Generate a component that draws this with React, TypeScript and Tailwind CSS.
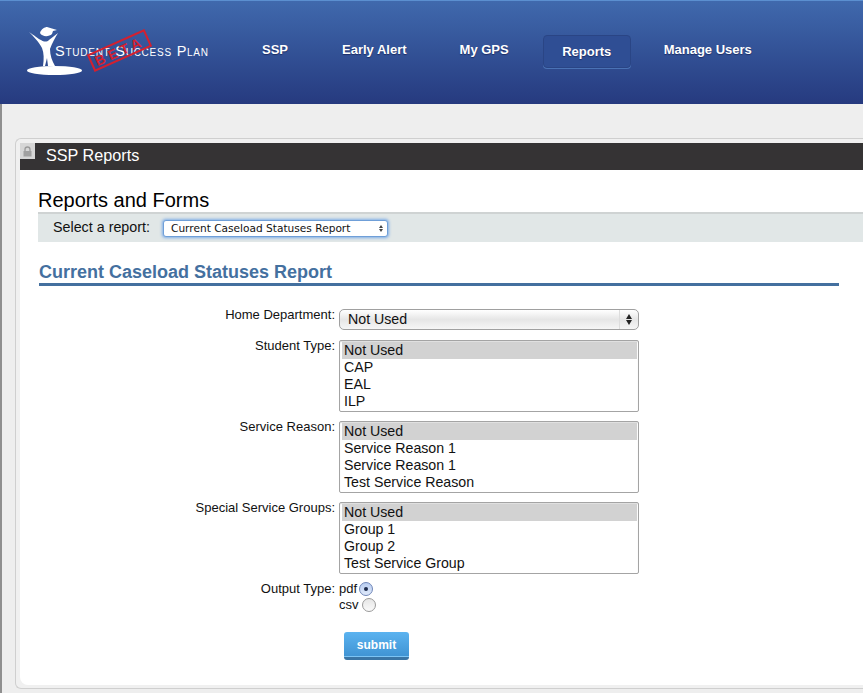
const font = "font-['Liberation_Sans',Arial,sans-serif]"

const navItems = ['SSP', 'Early Alert', 'My GPS', 'Reports', 'Manage Users']

function Logo() {
  return (
    <div className="relative h-[56px] w-[181px] shrink-0">
      <svg width="56" height="56" viewBox="0 0 56 56" className="absolute left-0 top-0">
        {/* cap */}
        <path d="M13 8 C14 4 18 2 20 2 L30 5 L26 6 L25 9 C22 12 15 12 13 8 Z" fill="#fff" />
        {/* body and arms */}
        <path d="M2 7 C7 10 11 14 14 15 C17 17 20 17 22 15 C25 13 28 10 31 8 C28 13 25 18 23 24 C23 30 25 36 28 41 L21 41 L20 33 L18 41 L16 41 C17 34 17 28 15 23 C12 17 6 11 2 7 Z" fill="#fff" />
        <ellipse cx="27.500" cy="45.500" rx="27.500" ry="4.500" fill="#fff" />
      </svg>
      <span className="absolute left-[28px] top-[16px] whitespace-nowrap text-[14.500px] leading-[20px] tracking-[0.75px] text-white [font-variant:small-caps]">
        Student Success Plan
      </span>
      <span className="absolute left-[61px] top-[16px] flex h-[19px] w-[63px] -rotate-[24deg] items-center justify-center border-2 border-[#d3202f] text-[14px] font-bold leading-none tracking-[4px] text-[#d3202f]">
        BETA
      </span>
    </div>
  )
}

function ListBox({ label, options }: { label: string; options: string[] }) {
  return (
    <div className="flex gap-1">
      <div className="w-[335px] text-right text-[13px] leading-[11px] text-[#111]">{label}</div>
      <div className="h-[72px] w-[300px] rounded-[2px] border border-[#a4a4a4] bg-white pl-[2px] pr-[1px] pt-[1px] shadow-[inset_0_1px_1px_#ddd]">
        {options.map((o, i) => (
          <div key={i} className={`h-[17px] pl-[2px] text-[14.200px] leading-[17px] text-[#111] ${i === 0 ? 'bg-[#d2d2d2]' : ''}`}>
            {o}
          </div>
        ))}
      </div>
    </div>
  )
}

function Radio({ checked }: { checked?: boolean }) {
  return (
    <span
      className={`flex h-[14px] w-[14px] items-center justify-center rounded-full border ${
        checked
          ? 'border-[#6f86b8] bg-gradient-to-b from-[#b9cdf0] to-[#dfe9fa]'
          : 'border-[#9a9a9a] bg-gradient-to-b from-[#e6e6e6] to-[#fafafa]'
      }`}
    >
      {checked && <span className="h-[4px] w-[4px] rounded-full bg-[#1c2a4a]" />}
    </span>
  )
}

export default function App() {
  return (
    <div className={`${font} h-[693px] w-[863px] overflow-hidden bg-[#eeeeee]`}>
      <header className="flex h-[104px] border-t border-[#5b8fd0] bg-gradient-to-b from-[#4069ad] to-[#263a7f] pl-[27px] pt-[24px]">
        <Logo />
        <nav className="ml-[54px] flex h-[33px] items-start pt-[15px]">
          {navItems.map(item => (
            <div
              key={item}
              className={`flex items-center justify-center whitespace-nowrap text-[13px] font-bold text-white [text-shadow:0_1px_1px_#1c2d66] ${
                item === 'Reports'
                  ? 'ml-[34px] mr-[33px] -mt-[5px] h-[33px] w-[88px] rounded-[4px] border border-[#2a4585] bg-[#2f4e94] shadow-[0_1px_0_#4a72b5]'
                  : item === 'SSP'
                    ? 'mr-[54px] h-[20px]'
                    : item === 'Early Alert'
                      ? 'mr-[53px] h-[20px]'
                      : 'h-[20px]'
              }`}
            >
              {item}
            </div>
          ))}
        </nav>
      </header>

      <div className="h-[589px] border-l-2 border-[#8f8f8f] pl-[13px] pt-[34px]">
        <div className="h-[551px] rounded-l-[6px] border-b border-l border-t border-[#cfcfcf] bg-[#f0f0f0] pl-[4px] pt-[4px]">
          <div className="relative flex h-[27px] items-center rounded-tl-[4px] bg-[#353334] pb-[2px] pl-[26px] text-[16.200px] text-white">
            <span className="absolute left-0 top-0 flex h-[16px] w-[15px] items-center justify-center bg-[#d6d6d6]">
              <svg width="11" height="11" viewBox="0 0 11 11">
                <path d="M3 5 V3.500 a2.500 2.500 0 0 1 5 0 V5" fill="none" stroke="#9a9a9a" strokeWidth="1.300" />
                <rect x="1.500" y="5" width="8" height="5.500" fill="#a0a0a0" />
              </svg>
            </span>
            SSP Reports
          </div>

          <div className="h-[515px] rounded-bl-[8px] bg-white pt-[19px]">
            <h1 className="ml-[18px] text-[20px] leading-[23px] text-black">Reports and Forms</h1>
            <div className="ml-[18px] flex h-[30px] items-center border-t-2 border-[#cfd3d3] bg-[#e1e7e7] pl-[15px] text-[14.300px] text-[#111]">
              <span className="w-[110px]">Select a report:</span>
              <div className="flex h-[17px] w-[225px] items-center justify-between rounded-[3px] border border-[#6f9fd8] bg-white pl-[7px] pr-[4px] pt-[1px] font-['DejaVu_Sans',sans-serif] text-[10.600px] shadow-[0_0_3px_1px_#7fade6]">
                <span>Current Caseload Statuses Report</span>
                <span className="flex flex-col gap-[1px]">
                  <span className="h-0 w-0 border-x-[2.500px] border-b-[3px] border-x-transparent border-b-[#444]" />
                  <span className="h-0 w-0 border-x-[2.500px] border-t-[3px] border-x-transparent border-t-[#444]" />
                </span>
              </div>
            </div>

            <h2 className="ml-[19px] mr-[4px] mt-[20px] w-[800px] border-b-[3px] border-[#44709f] text-[18px] font-bold leading-[21px] text-[#44709f]">
              Current Caseload Statuses Report
            </h2>

            <div className="-ml-[20px] mt-[23px] flex flex-col">
              <div className="flex gap-1">
                <div className="w-[335px] text-right text-[13px] leading-[12px] text-[#111]">Home Department:</div>
                <div className="flex h-[21px] w-[300px] items-center justify-between rounded-[5px] border border-[#a0a0a0] bg-gradient-to-b from-[#ffffff] via-[#e6e6e6] to-[#f6f6f6] pl-[8px] text-[14.200px] text-[#111]">
                  <span>Not Used</span>
                  <span className="flex h-full w-[19px] flex-col items-center justify-center gap-[1px] border-l border-[#dddddd]">
                    <span className="h-0 w-0 border-x-[3.500px] border-b-[5px] border-x-transparent border-b-[#222]" />
                    <span className="h-0 w-0 border-x-[3.500px] border-t-[5px] border-x-transparent border-t-[#222]" />
                  </span>
                </div>
              </div>
              <div className="mt-[10px]">
                <ListBox label="Student Type:" options={['Not Used', 'CAP', 'EAL', 'ILP']} />
              </div>
              <div className="mt-[9px]">
                <ListBox label="Service Reason:" options={['Not Used', 'Service Reason 1', 'Service Reason 1', 'Test Service Reason']} />
              </div>
              <div className="mt-[9px]">
                <ListBox label="Special Service Groups:" options={['Not Used', 'Group 1', 'Group 2', 'Test Service Group']} />
              </div>
              <div className="mt-[7px] flex gap-1 text-[13px] leading-[16px] text-[#111]">
                <div className="w-[335px] text-right">Output Type:</div>
                <div className="flex flex-col">
                  <div className="flex items-center gap-[2px]">
                    pdf <Radio checked />
                  </div>
                  <div className="flex items-center gap-[3px]">
                    csv <Radio />
                  </div>
                </div>
              </div>
              <button className="ml-[344px] mt-[19px] h-[28px] w-[65px] rounded-[3px] border-b-[3px] border-[#3a75a5] bg-gradient-to-b from-[#5bb3f0] to-[#3f93d3] text-[12px] font-bold text-white shadow-[inset_0_-1px_0_#7cc4f4]">
                submit
              </button>
            </div>
          </div>
        </div>
      </div>
    </div>
  )
}
